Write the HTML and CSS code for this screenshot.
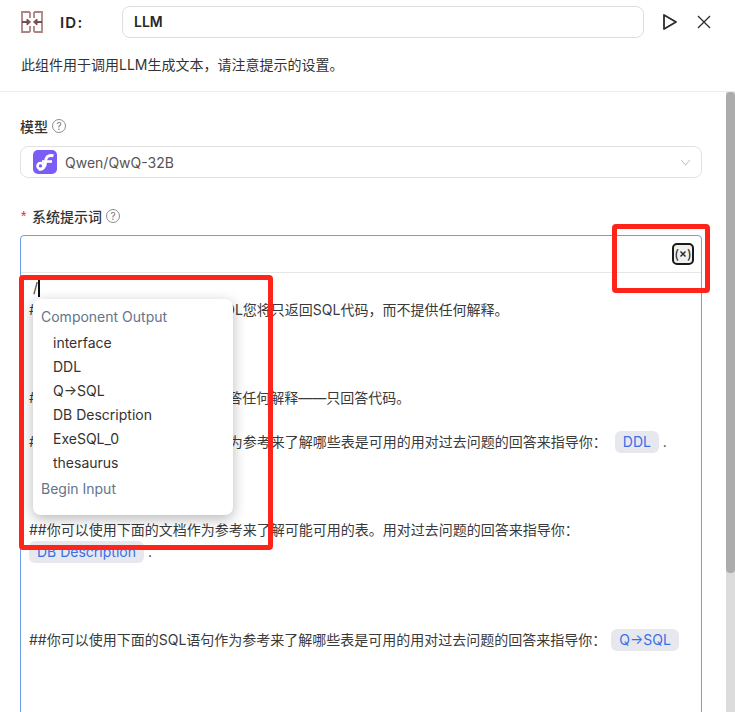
FILE: index.html
```html
<!DOCTYPE html>
<html lang="zh">
<head>
<meta charset="utf-8">
<title>LLM</title>
<link rel="stylesheet" href="styles.css">
</head>
<body>
<div class="panel">
  <header class="head">
    <div class="id-row">
      <svg class="comp-icon" viewBox="0 0 22 22" fill="none" stroke="#ad8383" stroke-width="1.800">
        <path d="M9 1H1V21H9M9 1V7M9 15V21M13 1H21V21H13M13 1V7M13 15V21"/>
        <path d="M1 11H8M21 11H14" stroke="#7d4b4b"/>
        <path d="M6 8L9.500 11L6 14ZM16 8L12.500 11L16 14Z" stroke="#7d4b4b" fill="#7d4b4b" stroke-width="1"/>
      </svg>
      <span class="id-label">ID:</span>
      <div class="id-input">LLM</div>
      <svg class="play" viewBox="0 0 16 18" fill="none" stroke="#2b2b2b" stroke-width="1.800" stroke-linejoin="round"><path d="M2 2L14 9L2 16Z"/></svg>
      <svg class="close" viewBox="0 0 14 14" fill="none" stroke="#2b2b2b" stroke-width="1.300"><path d="M1 1L13 13M13 1L1 13"/></svg>
    </div>
    <p class="desc">此组件用于调用LLM生成文本，请注意提示的设置。</p>
  </header>
  <div class="scroller">
    <main class="content">
      <div class="label">模型<span class="help">?</span></div>
      <div class="select">
        <svg class="logo" viewBox="0 0 24 24">
          <rect width="24" height="24" rx="5" fill="#7b5cf6"/>
          <path d="M20.500 5.800C15 4.200 12.500 7.500 12.500 12C12.500 17 9.500 20 6 19" fill="none" stroke="#fff" stroke-width="3"/>
          <path d="M9 11.500H19" stroke="#fff" stroke-width="2.600" fill="none"/>
          <circle cx="7.500" cy="16" r="3" fill="none" stroke="#fff" stroke-width="2.600"/>
        </svg>
        <span class="select-text">Qwen/QwQ-32B</span>
        <svg class="chevron" viewBox="0 0 12 8" fill="none" stroke="#bdbdbd" stroke-width="1.100"><path d="M1 1L6 7L11 1"/></svg>
      </div>
      <div class="label label-prompt"><span class="star">*</span>系统提示词<span class="help">?</span></div>
      <div class="editor">
        <div class="toolbar">
          <span class="var-btn">(<svg class="var-x" viewBox="0 0 6 6" stroke="#222" stroke-width="1.400"><path d="M0.500 0.500L5.500 5.500M5.500 0.500L0.500 5.500"/></svg>)</span>
        </div>
        <div class="editor-text">
          <div class="line line-slash">/<span class="caret"></span></div>
          <div class="line">##你是一名数据分析师，根据DDL您将只返回SQL代码，而不提供任何解释。</div>
          <div class="line"><br></div>
          <div class="line"><br></div>
          <div class="line"><br></div>
          <div class="line">##仅使用SQL代码回复，不得回答任何解释——只回答代码。</div>
          <div class="line"><br></div>
          <div class="line">##你可以使用下面的DDL语句作为参考来了解哪些表是可用的用对过去问题的回答来指导你： <span class="chip chip-ddl">DDL</span> .</div>
          <div class="line"><br></div>
          <div class="line"><br></div>
          <div class="line"><br></div>
          <div class="line">##你可以使用下面的文档作为参考来了解可能可用的表。用对过去问题的回答来指导你：</div>
          <div class="line"><span class="chip chip-first">DB Description</span> .</div>
          <div class="line"><br></div>
          <div class="line"><br></div>
          <div class="line"><br></div>
          <div class="line">##你可以使用下面的SQL语句作为参考来了解哪些表是可用的用对过去问题的回答来指导你： <span class="chip">Q→SQL</span></div>
          <div class="line"><br></div>
          <div class="line"><br></div>
          <div class="line"><br></div>
        </div>
        <div class="menu">
          <div class="menu-group">Component Output</div>
          <div class="menu-item">interface</div>
          <div class="menu-item">DDL</div>
          <div class="menu-item">Q→SQL</div>
          <div class="menu-item">DB Description</div>
          <div class="menu-item">ExeSQL_0</div>
          <div class="menu-item">thesaurus</div>
          <div class="menu-group menu-group-last">Begin Input</div>
        </div>
      </div>
    </main>
    <div class="scrollbar"><div class="thumb"></div></div>
  </div>
</div>
<div class="mark mark-var"></div>
<div class="mark mark-menu"></div>
</body>
</html>
```

FILE: styles.css
```css
* { box-sizing: border-box; }
html, body { margin: 0; height: 712px; overflow: hidden; background: #fff; }
body {
  font-family: Inter, "Noto Sans CJK SC", sans-serif;
  font-size: 14px;
  color: #333;
  position: relative;
}
.panel { display: flex; flex-direction: column; height: 712px; }
.head { height: 92px; flex: none; padding: 6px 23px 0 21px; border-bottom: 1px solid #ececec; }
.id-row { display: flex; align-items: center; height: 32px; }
.comp-icon { width: 22px; height: 22px; flex: none; }
.id-label { width: 62px; margin-left: 17px; font-weight: 600; font-size: 15px; color: #262626; letter-spacing: 1.2px; flex: none; }
.id-input {
  width: 522px; height: 32px; flex: none;
  border: 1px solid #dedede; border-radius: 8px;
  padding: 0 11px; line-height: 30px;
  font-weight: 600; color: #262626;
}
.play { width: 16px; height: 18px; margin-left: 18px; flex: none; }
.close { width: 14px; height: 14px; margin-left: 19px; flex: none; }
.desc { margin: 16px 0 0; line-height: 22px; color: #333; }
.scroller { flex: 1; display: flex; min-height: 0; }
.content { flex: 1; min-width: 0; padding: 23px 24px 0 20px; overflow: hidden; }
.scrollbar { width: 9px; flex: none; background: #dcdcdc; }
.thumb { height: 481px; background: #acacac; border-radius: 4px; }
.label { display: flex; align-items: center; height: 22px; font-weight: 500; color: #333; }
.help {
  width: 14px; height: 14px; margin-left: 4px;
  border: 1px solid #8c8c8c; border-radius: 50%;
  font-size: 10px; line-height: 12px; text-align: center; font-weight: 400; color: #777;
}
.select {
  display: flex; align-items: center;
  height: 32px; margin-top: 9px;
  border: 1px solid #e2e2e2; border-radius: 8px;
  padding: 0 10px 0 12px;
}
.logo { width: 24px; height: 24px; flex: none; }
.select-text { margin-left: 8px; color: #555; flex: 1; }
.chevron { width: 11px; height: 7px; flex: none; }
.label-prompt { margin-top: 27px; }
.star { color: #f5222d; margin: 0 5px 0 1px; width: 6px; font-family: "Liberation Sans", sans-serif; }
.editor {
  position: relative;
  margin-top: 8px;
  height: 700px;
  border: 1px solid #6d9eeb; border-radius: 4px 4px 0 0;
}
.toolbar {
  display: flex; justify-content: flex-end; align-items: center;
  height: 37px; padding: 0 7px 0 0;
  border-bottom: 1px solid #e7e7e7;
}
.var-btn {
  display: flex; align-items: center; justify-content: center;
  width: 22px; height: 22px;
  border: 2px solid #1a1a1a; border-radius: 5px; background: #f0f0f0;
  font-size: 13px; line-height: 16px; color: #222;
}
.var-x { width: 6px; height: 6px; margin: 0 1px; }
.editor-text { padding: 4px 8px 0; }
.line { height: 22px; line-height: 22px; white-space: nowrap; color: #3a3a3a; }
.line-slash { padding-left: 4px; }
.caret { display: inline-block; width: 2px; height: 18px; background: #111; vertical-align: -4px; }
.chip {
  display: inline-block; height: 22px; line-height: 22px;
  padding: 0 8px; margin-left: 1px;
  background: #e6e8ee; border-radius: 6px; color: #3b6fe6;
}
.chip-ddl { margin-left: 4px; }
.chip-first { margin-left: 0; }
.menu {
  position: absolute; left: 12px; top: 63px;
  width: 200px; height: 216px;
  background: #fff; border-radius: 8px;
  box-shadow: 0 4px 14px rgba(0,0,0,.28);
  padding: 6px 8px;
}
.menu-group { height: 24px; line-height: 24px; color: #64748b; font-size: 14px; }
.menu-group-last { margin-top: 2px; }
.menu-item { height: 24px; line-height: 24px; padding-left: 12px; color: #333; }
.menu-group + .menu-item { margin-top: 2px; }
.mark { position: absolute; border: 5px solid #ff2419; border-radius: 4px; }
.mark-var { left: 612px; top: 224px; width: 98px; height: 69px; }
.mark-menu { left: 19px; top: 275px; width: 254px; height: 275px; }
```
